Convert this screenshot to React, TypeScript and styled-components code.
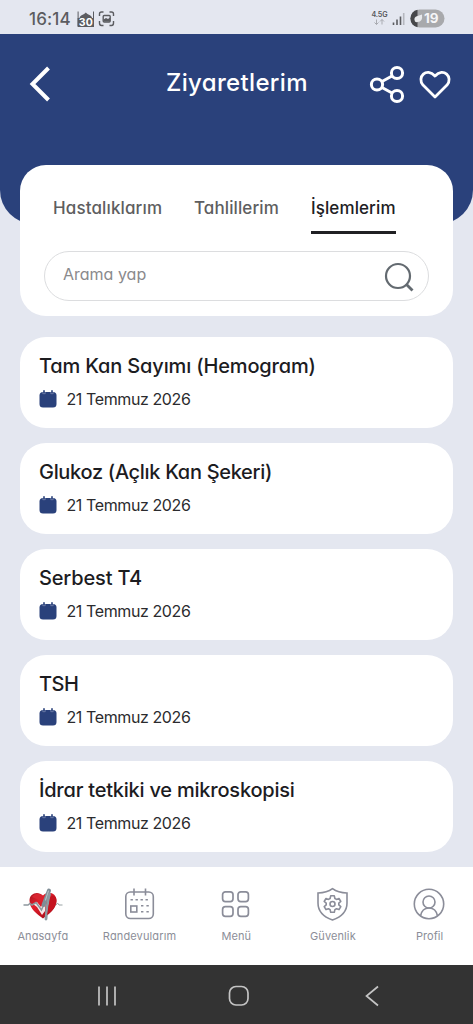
import React from 'react';
import styled, { createGlobalStyle } from 'styled-components';

const Global = createGlobalStyle`
  * { box-sizing: border-box; }
  body {
    margin: 0;
    background: #e4e7f0;
    font-family: Inter, "Open Sans", sans-serif;
    font-feature-settings: "cv11";
  }
`;

const Screen = styled.div`
  width: 473px;
  height: 1024px;
  display: flex;
  flex-direction: column;
  overflow: hidden;
  background: #e4e7f0;
`;

const StatusBar = styled.div`
  height: 34px;
  flex: none;
  display: flex;
  align-items: center;
  justify-content: space-between;
  padding: 3px 28px 0 29px;
  color: #5b5c60;
`;

const StatusGroup = styled.div<{ $gap: number }>`
  display: flex;
  align-items: center;
  gap: ${(p) => p.$gap}px;
`;

const Clock = styled.span`
  font-size: 17px;
  font-weight: 500;
  width: 42px;
  line-height: 20px;
  letter-spacing: 0.15px;
  white-space: nowrap;
`;

const Header = styled.header`
  height: 190px;
  flex: none;
  background: #2a417b;
  border-radius: 0 0 34px 34px;
  padding: 28px 21px 0 29px;
`;

const HeaderRow = styled.div`
  height: 44px;
  display: grid;
  grid-template-columns: 90px 1fr 84px;
  align-items: center;
  color: #fff;
`;

const Title = styled.h1`
  margin: 0;
  padding: 0 0 3px 47px;
  font-size: 24px;
  font-weight: 500;
  line-height: 30px;
  letter-spacing: 0.33px;
  white-space: nowrap;
`;

const HeaderActions = styled.div`
  display: flex;
  align-items: center;
  justify-content: space-between;
`;

const Main = styled.main`
  flex: 1;
  min-height: 0;
  padding: 0 20px;
  margin-top: -59px;
  display: flex;
  flex-direction: column;
`;

const FilterCard = styled.section`
  height: 151px;
  flex: none;
  border-radius: 26px;
  background: #fff;
  padding: 28px 24px 0;
`;

const Tabs = styled.div`
  display: flex;
  gap: 32px;
  padding-left: 9px;
`;

const Tab = styled.div<{ $active?: boolean; $spacing: number; $width: number }>`
  width: ${(p) => p.$width}px;
  height: 41px;
  padding-top: 3px;
  font-size: 17px;
  line-height: 24px;
  font-weight: 500;
  color: ${(p) => (p.$active ? '#202023' : '#5e5e60')};
  letter-spacing: ${(p) => p.$spacing}px;
  white-space: nowrap;
  border-bottom: ${(p) => (p.$active ? '3px solid #202023' : '0')};
`;

const SearchBox = styled.div`
  width: 385px;
  height: 50px;
  margin-top: 17px;
  border: 1px solid #dcdddf;
  border-radius: 25px;
  display: flex;
  align-items: center;
  justify-content: space-between;
  padding: 1px 13px 0 18px;
`;

const Placeholder = styled.span`
  font-size: 16px;
  line-height: 20px;
  padding-bottom: 5px;
  color: #8a8a8c;
`;

const List = styled.div`
  display: flex;
  flex-direction: column;
  gap: 15px;
  margin-top: 21px;
`;

const Card = styled.article`
  height: 91px;
  border-radius: 26px;
  background: #fff;
  padding: 16px 20px 0 19px;
`;

const CardTitle = styled.h2<{ $spacing: number }>`
  margin: 0;
  font-size: 20px;
  font-weight: 500;
  line-height: 26px;
  letter-spacing: ${(p) => p.$spacing}px;
  color: #1c1c1f;
  white-space: nowrap;
`;

const DateRow = styled.div`
  display: flex;
  align-items: center;
  gap: 9.5px;
  margin-top: 9px;
`;

const DateText = styled.span`
  font-size: 16px;
  line-height: 22px;
  letter-spacing: -0.4px;
  color: #2b2b2e;
`;

const BottomNav = styled.nav`
  height: 98px;
  flex: none;
  background: #fff;
  display: grid;
  grid-template-columns: repeat(5, 96.7px);
  margin-left: -5.5px;
  width: 484px;
`;

const NavItem = styled.div<{ $spacing: number; $raised?: boolean }>`
  display: flex;
  flex-direction: column;
  align-items: center;
  padding-top: 20px;
  gap: ${(p) => (p.$raised ? 2.5 : 3)}px;
  font-size: 11px;
  line-height: 16px;
  letter-spacing: ${(p) => p.$spacing}px;
  color: #8c8e98;
`;

const SystemNav = styled.div`
  height: 59px;
  flex: none;
  background: #333;
  display: flex;
  align-items: center;
  justify-content: space-between;
  padding: 2px 92px 0 95px;
`;

const HomeKey = styled.svg`
  margin-right: 6px;
`;

const CalendarGlyph = () => (
  <svg width="18" height="18" viewBox="0 0 18 18">
    <rect x="0.5" y="2" width="17" height="15.5" rx="3.5" fill="#2a417b" />
    <path d="M5 0.8V4M13 0.8V4" stroke="#2a417b" strokeWidth="1.6" strokeLinecap="round" />
    <path d="M3.8 2v1.7h2.4V2M11.8 2v1.7h2.4V2" stroke="#8d9abd" strokeWidth="0.6" fill="none" />
  </svg>
);

const HomeIcon = () => (
  <svg width="40" height="38" viewBox="0 0 40 38">
    <defs>
      <linearGradient id="heart" x1="0" y1="0" x2="1" y2="1">
        <stop offset="0" stopColor="#a3141f" />
        <stop offset="0.35" stopColor="#e3202d" />
        <stop offset="0.65" stopColor="#c0121f" />
        <stop offset="1" stopColor="#7c0b14" />
      </linearGradient>
    </defs>
    <path d="M20 31.500C14 27 6.500 22 6.500 13.500C6.500 6 15 3.500 20 8.500C25 3 33.500 6 33.500 13.500C33.500 22 26 27 20 31.500Z" fill="url(#heart)" />
    <path d="M9 10C12 5.500 18 6 20 10L18 14Z" fill="#d92531" />
    <path d="M10 17L14 15L18 20L23 11L22 24L19 28L14 20Z" fill="#f6e9e9" />
    <path d="M0.500 18H5L7 16.500L9 18L13 15.500L18.500 23L26 5" fill="none" stroke="#8d979d" strokeWidth="1.500" />
    <path d="M20.500 18L26 3.500" stroke="#7f8d96" strokeWidth="4" strokeLinecap="round" />
    <path d="M22.500 13L25.500 4" stroke="#b3bec3" strokeWidth="1.200" strokeLinecap="round" />
    <path d="M26.500 7L24 20L23 32" fill="none" stroke="#8d9aa1" strokeWidth="2.800" strokeLinecap="round" />
    <path d="M27 11C28 8 32 8 33.300 12C34.500 19 28 25 24 28Z" fill="#c5131f" />
    <path d="M33 18L34.500 16L36 18H39.500" stroke="#9aa3a5" strokeWidth="1" fill="none" />
  </svg>
);

const navStroke = { fill: 'none', stroke: '#8b8d99', strokeWidth: 1.6 } as const;

const AppointmentIcon = () => (
  <svg width="38" height="38" viewBox="0 0 38 38" {...navStroke}>
    <rect x="4.800" y="5" width="27.500" height="26.500" rx="4.500" />
    <path d="M13 1.500V8.500M24.500 1.500V8.500" />
    <path d="M9.500 12.800H29.500" strokeDasharray="2.400 2.600" />
    <path d="M20 18.800H28.500M20 24.800H28.500" strokeDasharray="2.400 3" />
    <rect x="9.800" y="19" width="6" height="6" />
  </svg>
);

const MenuIcon = () => (
  <svg width="38" height="38" viewBox="0 0 38 38" {...navStroke} strokeWidth="1.700">
    <rect x="5.600" y="4.800" width="10.400" height="9.800" rx="2.800" />
    <rect x="21" y="4.800" width="10.400" height="9.800" rx="2.800" />
    <rect x="5.600" y="19.600" width="10.400" height="9.800" rx="2.800" />
    <rect x="21" y="19.600" width="10.400" height="9.800" rx="2.800" />
  </svg>
);

const ShieldIcon = () => (
  <svg width="38" height="38" viewBox="0 0 38 38" {...navStroke}>
    <path d="M18.500 1.700C14.500 4.800 9.500 6 4 6V16C4 24.500 10 30 18.500 33C27 30 33 24.500 33 16V6C27.500 6 22.500 4.800 18.500 1.700Z" />
    <circle cx="18.500" cy="17" r="2.500" />
    <path transform="translate(-0.5)" strokeLinejoin="round" d="M17.200 8.800H20.800L21.400 11.500L23 12.400L25.500 11.500L27.300 14.500L25.300 16.200V17.900L27.300 19.600L25.500 22.600L23 21.700L21.400 22.600L20.800 25.300H17.200L16.600 22.600L15 21.700L12.500 22.600L10.700 19.600L12.700 17.900V16.200L10.700 14.500L12.500 11.500L15 12.400L16.600 11.500Z" />
  </svg>
);

const ProfileIcon = () => (
  <svg width="38" height="38" viewBox="0 0 38 38" {...navStroke}>
    <circle cx="18" cy="17" r="14.700" />
    <circle cx="18" cy="15" r="6" />
    <path d="M9.500 29C10.500 23.500 14 21 18 21S25.500 23.500 26.500 29" />
  </svg>
);

const procedures = [
  { name: 'Tam Kan Sayımı (Hemogram)', spacing: -0.16 },
  { name: 'Glukoz (Açlık Kan Şekeri)', spacing: -0.31 },
  { name: 'Serbest T4', spacing: -0.15 },
  { name: 'TSH', spacing: -0.5 },
  { name: 'İdrar tetkiki ve mikroskopisi', spacing: -0.22 },
];

export default function App() {
  return (
    <Screen>
      <Global />
      <StatusBar>
        <StatusGroup $gap={6}>
          <Clock>16:14</Clock>
          <svg width="38" height="18" viewBox="0 0 38 18">
            <path d="M0.600 17V8H2.500C3 5 7 5 8.800 2.500C10.600 5 14.600 5 15.100 8H17V17Z" fill="#5b5c60" />
            <path d="M1.100 1.500V16M16.500 1.500V16" stroke="#5b5c60" strokeWidth="1" />
            <text x="8.800" y="16" fontSize="10.500" fontWeight="700" textAnchor="middle" fill="#fff" fontFamily="Inter">30</text>
            <g fill="none" stroke="#5b5c60" strokeWidth="1.400">
              <path d="M22.500 6V4Q22.500 2 24.500 2H26.500M32.500 2H34.500Q36.500 2 36.500 4V6M36.500 11V13Q36.500 15.500 34.500 15.500H32.500M26.500 15.500H24.500Q22.500 15.500 22.500 13V11" />
              <rect x="26.200" y="5.500" width="7" height="6.500" rx="1" />
            </g>
            <path d="M26.500 11.500V9.500L29 8L31 9L33 7.500V11.500Z" fill="#5b5c60" />
          </svg>
        </StatusGroup>
        <svg width="74" height="20" viewBox="0 0 74 20">
          <text x="0.500" y="8.300" fontSize="7.200" fontWeight="600" fill="#55565a" fontFamily="Inter" letterSpacing="-0.2">4.5G</text>
          <path d="M5.500 10.500V15.500M3.500 13.500L5.500 15.500L7.500 13.500M11 15.500V10.500M9 12.500L11 10.500L13 12.500" stroke="#a9abb1" fill="none" strokeWidth="1" />
          <path d="M22.500 16V13.500M26 16V10.500M29.500 16V7.500" stroke="#5b5c60" strokeWidth="1.600" />
          <path d="M32.700 16V4" stroke="#b5b7be" strokeWidth="1.600" />
          <rect x="39.500" y="0.500" width="34" height="18" rx="9" fill="#a8a9ac" />
          <path d="M46.500 0.700A9 9 0 0 0 46.500 18.300Z" fill="#46474a" />
          <path d="M44 12.500Q42 8 46.500 7L51 5.500Q52 13 46.500 13Q45 13.500 44 12.500M43.500 14.500L48 9.500" fill="#e8e9ec" />
          <text x="53" y="14.300" fontSize="13.500" fontWeight="700" fill="#f5f5f7" fontFamily="Inter">19</text>
        </svg>
      </StatusBar>

      <Header>
        <HeaderRow>
          <svg width="22" height="36" viewBox="0 0 22 36">
            <path d="M19.500 2L3.500 18L19.500 34" stroke="#fff" strokeWidth="4" fill="none" />
          </svg>
          <Title>Ziyaretlerim</Title>
          <HeaderActions>
            <svg width="38" height="40" viewBox="0 0 38 40" fill="none" stroke="#fff" strokeWidth="3">
              <circle cx="9" cy="20.500" r="5.600" />
              <circle cx="29" cy="9" r="5.600" />
              <circle cx="29" cy="32" r="5.600" />
              <path d="M14 17.500L24 12M14 23.500L24 29" />
            </svg>
            <svg width="34" height="32" viewBox="0 0 34 32" fill="none" stroke="#fff" strokeWidth="2.800">
              <path d="M17 29L5 17.100C-1.500 9.500 8.500 -1.500 17 8C25.500 -1.500 35.500 9.500 29 17.100Z" strokeLinejoin="round" />
            </svg>
          </HeaderActions>
        </HeaderRow>
      </Header>

      <Main>
        <FilterCard>
          <Tabs>
            <Tab $spacing={0.13} $width={109}>Hastalıklarım</Tab>
            <Tab $spacing={0.1} $width={85}>Tahlillerim</Tab>
            <Tab $spacing={0.1} $width={85} $active>İşlemlerim</Tab>
          </Tabs>
          <SearchBox>
            <Placeholder>Arama yap</Placeholder>
            <svg width="32" height="32" viewBox="0 0 32 32" fill="none" stroke="#636a70">
              <circle cx="15" cy="15" r="12" strokeWidth="2.200" />
              <path d="M23.500 23.500L29.500 29.500" strokeWidth="2.800" />
            </svg>
          </SearchBox>
        </FilterCard>
        <List>
          {procedures.map((p) => (
            <Card key={p.name}>
              <CardTitle $spacing={p.spacing}>{p.name}</CardTitle>
              <DateRow>
                <CalendarGlyph />
                <DateText>21 Temmuz 2026</DateText>
              </DateRow>
            </Card>
          ))}
        </List>
      </Main>

      <BottomNav>
        <NavItem $spacing={0.08}><HomeIcon />Anasayfa</NavItem>
        <NavItem $spacing={0.13} $raised><AppointmentIcon />Randevularım</NavItem>
        <NavItem $spacing={0}><MenuIcon />Menü</NavItem>
        <NavItem $spacing={0.1}><ShieldIcon />Güvenlik</NavItem>
        <NavItem $spacing={0}><ProfileIcon />Profil</NavItem>
      </BottomNav>

      <SystemNav>
        <svg width="24" height="22" viewBox="0 0 24 22" stroke="#c4c4c4" strokeWidth="1.700">
          <path d="M4 1.500V20.500M12 1.500V20.500M20 1.500V20.500" />
        </svg>
        <HomeKey width="22" height="22" viewBox="0 0 22 22" fill="none" stroke="#c4c4c4" strokeWidth="1.700">
          <rect x="1.500" y="1.500" width="18.500" height="18.500" rx="6.500" />
        </HomeKey>
        <svg width="16" height="22" viewBox="0 0 16 22" fill="none" stroke="#c4c4c4" strokeWidth="1.700">
          <path d="M13 1.500L1.500 11L13 20.500" />
        </svg>
      </SystemNav>
    </Screen>
  );
}
